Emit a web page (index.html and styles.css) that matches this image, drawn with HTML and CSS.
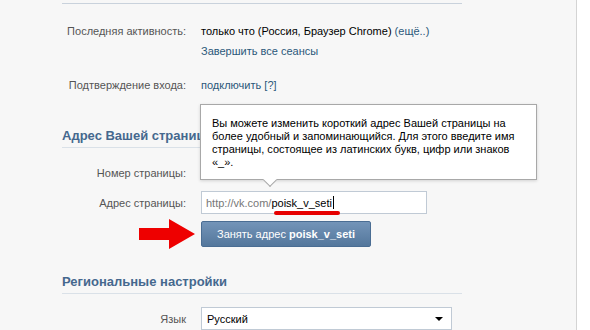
FILE: index.html
```html
<!DOCTYPE html>
<html lang="ru">
<head>
  <meta charset="UTF-8" />
  <title>Настройки</title>
  <link rel="stylesheet" href="styles.css">
</head>
<body>
  <div class="page">
    <div class="panel">
      <div class="top-line"></div>

      <div class="row row-activity">
        <div class="label">Последняя активность:</div>
        <div class="value">только что (Россия, Браузер Chrome) <a class="link">(ещё..)</a></div>
      </div>
      <div class="row row-sessions">
        <div class="label"></div>
        <div class="value"><a class="link">Завершить все сеансы</a></div>
      </div>
      <div class="row row-confirm">
        <div class="label">Подтверждение входа:</div>
        <div class="value"><a class="link">подключить</a> <a class="link">[?]</a></div>
      </div>

      <div class="section-title title-address">Адрес Вашей страницы</div>

      <div class="row row-number">
        <div class="label">Номер страницы:</div>
        <div class="value"></div>
      </div>
      <div class="row row-address">
        <div class="label">Адрес страницы:</div>
        <div class="value">
          <div class="input">
            <span class="prefix">http://vk.com/</span><span class="nick">poisk_v_seti</span><span class="caret"></span>
            <span class="red-line"></span>
          </div>
        </div>
      </div>
      <div class="row row-button">
        <div class="label">
          <svg class="arrow" width="56" height="30" viewBox="0 0 56 30">
            <polygon points="0,9 30,9 30,0 56,15 30,30 30,21 0,21" fill="#ee0000"/>
          </svg>
        </div>
        <div class="value">
          <button class="btn">Занять адрес <b>poisk_v_seti</b></button>
        </div>
      </div>

      <div class="section-title title-region">Региональные настройки</div>

      <div class="row row-lang">
        <div class="label">Язык</div>
        <div class="value">
          <div class="select">Русский<span class="select-arrow"></span></div>
        </div>
      </div>

      <div class="tooltip">
        Вы можете изменить короткий адрес Вашей страницы на более удобный и запоминающийся. Для этого введите имя страницы, состоящее из латинских букв, цифр или знаков «_».
      </div>
    </div>
  </div>
</body>
</html>
```

FILE: styles.css
```css
body {
  margin: 0;
  background-color: #fff;
  font-family: "Liberation Sans", Arial, sans-serif;
  font-size: 11px;
  color: #000;
}

.page {
  display: flex;
  height: 330px;
  overflow: hidden;
}

.panel {
  position: relative;
  width: 576px;
  background-color: #f7f7f7;
  border-right: 1px solid #d4d4d4;
}

.top-line {
  margin: 3px 0 0 62px;
  width: 400px;
  height: 1px;
  background-color: #c9d2dc;
}

.row {
  display: flex;
  align-items: center;
}

.label {
  width: 186px;
  text-align: right;
  color: #555;
  flex-shrink: 0;
}

.value {
  margin-left: 15px;
}

.link {
  color: #2b587a;
}

.row-activity { margin-top: 19px; height: 16px; }
.row-sessions { margin-top: 4px; height: 16px; }
.row-confirm  { margin-top: 18px; height: 16px; }
.row-number   { margin-top: 17px; height: 16px; }
.row-address  { margin-top: 10px; height: 23px; }
.row-button   { margin-top: 7px; height: 26px; }
.row-lang     { margin-top: 13px; height: 23px; }

.section-title {
  margin-left: 62px;
  width: 400px;
  font-size: 13px;
  font-weight: bold;
  color: #45688e;
  border-bottom: 1px solid #dae1e8;
  padding-bottom: 4px;
}

.title-address { margin-top: 35px; }
.title-region  { margin-top: 27px; }

.input {
  position: relative;
  width: 220px;
  height: 21px;
  padding-left: 4px;
  border: 1px solid #c0cad5;
  background-color: #fff;
  display: flex;
  align-items: center;
}

.prefix { color: #777; }

.caret {
  display: inline-block;
  width: 1px;
  height: 13px;
  background-color: #000;
  margin-left: 1px;
}

.red-line {
  position: absolute;
  left: 72px;
  top: 19px;
  width: 66px;
  height: 4px;
  border-radius: 2px;
  background-color: #e60000;
}

.arrow {
  margin-right: -9px;
  margin-top: 2px;
}

.btn {
  height: 26px;
  width: 170px;
  padding: 0;
  border: 1px solid #4a6d93;
  border-radius: 2px;
  background: linear-gradient(#7394b8, #54779c);
  color: #fff;
  font-family: inherit;
  font-size: 11px;
  cursor: pointer;
}

.select {
  position: relative;
  width: 244px;
  height: 21px;
  padding-left: 5px;
  border: 1px solid #c0cad5;
  background-color: #fff;
  display: flex;
  align-items: center;
}

.select-arrow {
  position: absolute;
  right: 8px;
  top: 9px;
  width: 0;
  height: 0;
  border-left: 4px solid transparent;
  border-right: 4px solid transparent;
  border-top: 4px solid #000;
}

.tooltip {
  position: absolute;
  left: 200px;
  top: 104px;
  width: 306px;
  padding: 12px 18px 10px 11px;
  background-color: #fff;
  border: 1px solid #a8a8a8;
  box-shadow: 0 1px 3px rgba(0, 0, 0, 0.15);
  line-height: 13px;
  color: #000;
}

.tooltip::after {
  content: "";
  position: absolute;
  left: 64px;
  bottom: -6px;
  width: 9px;
  height: 9px;
  background-color: #fff;
  border-right: 1px solid #a8a8a8;
  border-bottom: 1px solid #a8a8a8;
  transform: rotate(45deg);
}
```
